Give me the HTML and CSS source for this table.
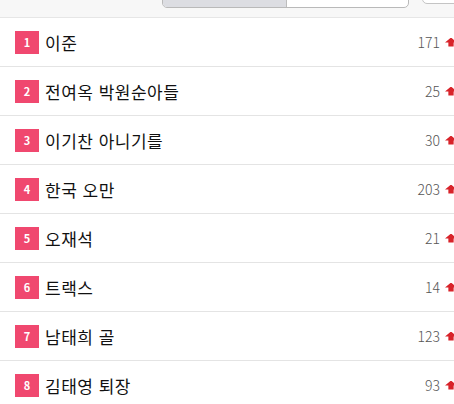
FILE: index.html
```html
<!DOCTYPE html>
<html lang="ko">
<head>
    <meta charset="utf-8">
    <title>순위</title>
    <link rel="stylesheet" href="styles.css">
</head>
<body>
<div class="top">
    <div class="tabs">
        <span class="tab on"></span>
        <span class="tab"></span>
    </div>
    <div class="more"></div>
</div>
<ul class="rank">
    <li><span class="num">1</span><span class="title">이준</span><span class="cnt">171</span><span class="up"></span></li>
    <li><span class="num">2</span><span class="title">전여옥 박원순아들</span><span class="cnt">25</span><span class="up"></span></li>
    <li><span class="num">3</span><span class="title">이기찬 아니기를</span><span class="cnt">30</span><span class="up"></span></li>
    <li><span class="num">4</span><span class="title">한국 오만</span><span class="cnt">203</span><span class="up"></span></li>
    <li><span class="num">5</span><span class="title">오재석</span><span class="cnt">21</span><span class="up"></span></li>
    <li><span class="num">6</span><span class="title">트랙스</span><span class="cnt">14</span><span class="up"></span></li>
    <li><span class="num">7</span><span class="title">남태희 골</span><span class="cnt">123</span><span class="up"></span></li>
    <li><span class="num">8</span><span class="title">김태영 퇴장</span><span class="cnt">93</span><span class="up"></span></li>
</ul>
</body>
</html>
```

FILE: styles.css
```css
body {
    margin: 0;
    background: #fff;
    font-family: "Noto Sans CJK KR", "Noto Sans", sans-serif;
    overflow: hidden;
}

.top {
    height: 17px;
    background: #f7f7f7;
    border-bottom: 1px solid #e6e6e6;
    position: relative;
    overflow: hidden;
}

.tabs {
    position: absolute;
    left: 162px;
    top: -10px;
    width: 245px;
    height: 16px;
    display: flex;
    border: 1px solid #b9b9b9;
    border-radius: 5px;
    overflow: hidden;
    background: #fff;
}

.tab {
    flex: 1;
}

.tab.on {
    flex: 0 0 123px;
    background: #dcdde2;
    border-right: 1px solid #bdbdbd;
}

.more {
    position: absolute;
    left: 422px;
    top: -10px;
    width: 40px;
    height: 12px;
    border: 1px solid #c4c4c4;
    border-radius: 5px;
    background: #fff;
}

.rank {
    list-style: none;
    margin: 0;
    padding: 0;
    overflow: hidden;
}

.rank li {
    height: 48px;
    border-bottom: 1px solid #e4e4e4;
    display: flex;
    align-items: center;
    padding-left: 15px;
}

.num {
    width: 24px;
    height: 23px;
    background: #f0486f;
    color: #fff;
    font-size: 11px;
    font-weight: bold;
    display: flex;
    align-items: center;
    justify-content: center;
    margin-right: 6px;
}

.title {
    flex: 1;
    font-size: 17px;
    color: #111;
    letter-spacing: 0.5px;
}

.cnt {
    font-size: 14px;
    color: #555;
    font-weight: 300;
    margin-right: 5px;
}

.up {
    flex: none;
    width: 12px;
    height: 9px;
    background: #d8232a;
    clip-path: polygon(50% 0, 100% 55%, 72% 55%, 72% 100%, 28% 100%, 28% 55%, 0 55%);
    margin-right: -3px;
}
```
